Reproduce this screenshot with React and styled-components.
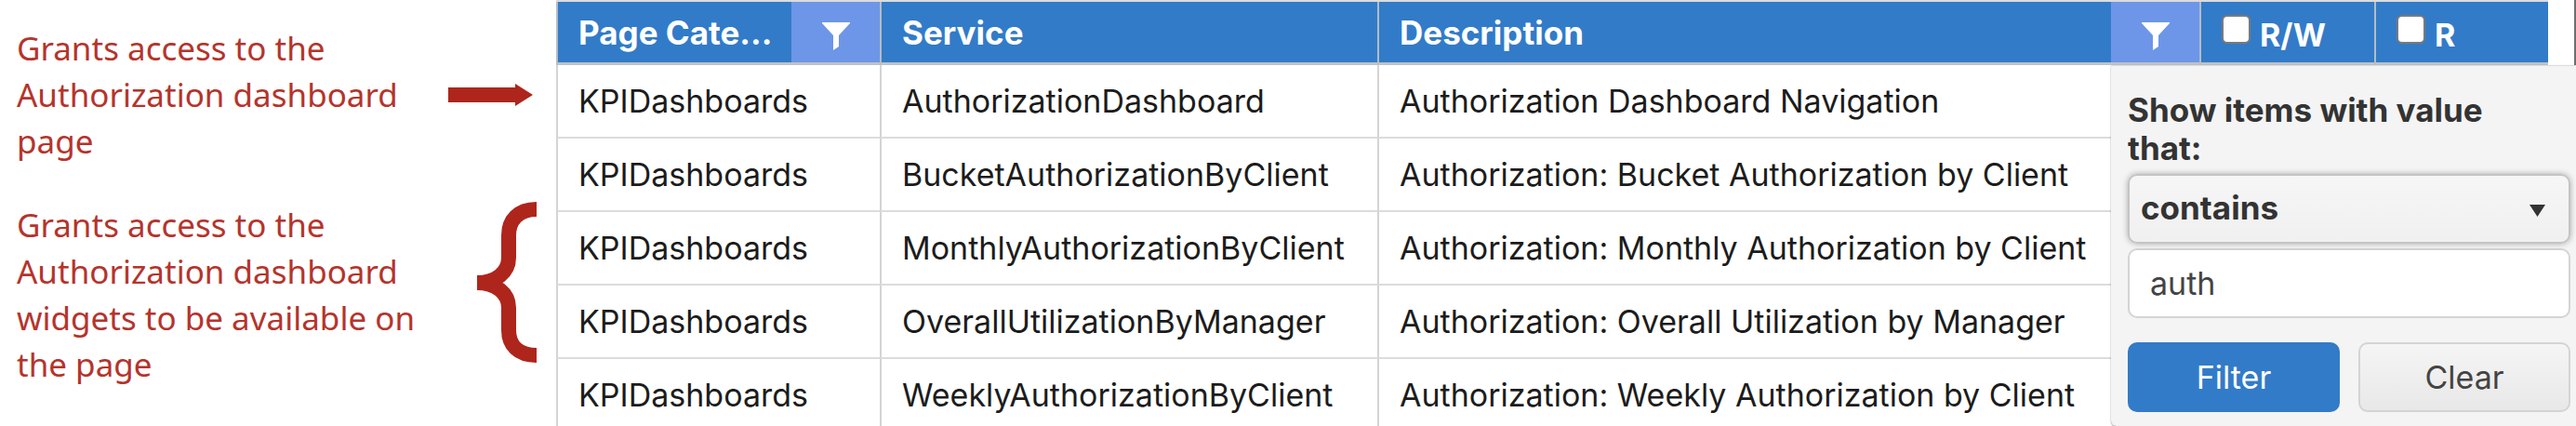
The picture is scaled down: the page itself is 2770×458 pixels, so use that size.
import React, { useState } from "react";
import styled, { createGlobalStyle } from "styled-components";

const rows = [
  {
    service: "AuthorizationDashboard",
    description: "Authorization Dashboard Navigation",
  },
  {
    service: "BucketAuthorizationByClient",
    description: "Authorization: Bucket Authorization by Client",
  },
  {
    service: "MonthlyAuthorizationByClient",
    description: "Authorization: Monthly Authorization by Client",
  },
  {
    service: "OverallUtilizationByManager",
    description: "Authorization: Overall Utilization by Manager",
  },
  {
    service: "WeeklyAuthorizationByClient",
    description: "Authorization: Weekly Authorization by Client",
  },
];

const FunnelIcon = () => (
  <svg width="30" height="30" viewBox="0 0 30 30" aria-hidden="true">
    <path d="M0 0H30V1L18 14V26L12 30V14L0 1Z" fill="#fff" />
  </svg>
);

const App = () => {
  const [value, setValue] = useState("auth");

  return (
    <Page>
      <GlobalStyle />
      <Notes>
        <Note $align="center">
          <NoteText>
            Grants access to the Authorization dashboard page
          </NoteText>
          <svg width="95" height="24" viewBox="0 0 95 24" aria-hidden="true">
            <path d="M0 4H72V0L91 12L72 24V20H0Z" fill="#ae251c" />
          </svg>
        </Note>
        <Note $align="flex-start">
          <NoteText>
            Grants access to the Authorization dashboard widgets to be available
            on the page
          </NoteText>
          <svg width="64" height="173" viewBox="0 0 64 173" aria-hidden="true">
            <path
              d="M64 8C44 8 34 20 34 36V60C34 76 20 87 0 87C20 87 34 98 34 114V138C34 154 44 165 64 165"
              fill="none"
              stroke="#ae251c"
              strokeWidth="16"
            />
          </svg>
        </Note>
      </Notes>
      <GridArea>
        <Table>
          <colgroup>
            <Col $width="348px" />
            <Col $width="535px" />
            <Col />
            <Col $width="188px" />
            <Col $width="187px" />
          </colgroup>
          <thead>
            <tr>
              <HeadCell>
                <HeadInner>
                  <HeadTitle>Page Cate...</HeadTitle>
                  <FilterBtn aria-label="Filter page category">
                    <FunnelIcon />
                  </FilterBtn>
                </HeadInner>
              </HeadCell>
              <HeadCell>
                <HeadInner>
                  <HeadTitle>Service</HeadTitle>
                </HeadInner>
              </HeadCell>
              <HeadCell>
                <HeadInner>
                  <HeadTitle>Description</HeadTitle>
                  <FilterBtn aria-label="Filter description">
                    <FunnelIcon />
                  </FilterBtn>
                </HeadInner>
              </HeadCell>
              <HeadCell>
                <CheckLabel>
                  <Check type="checkbox" />
                  <span>R/W</span>
                </CheckLabel>
              </HeadCell>
              <HeadCell>
                <CheckLabel>
                  <Check type="checkbox" />
                  <span>R</span>
                </CheckLabel>
              </HeadCell>
            </tr>
          </thead>
          <tbody>
            {rows.map((row) => (
              <tr key={row.service}>
                <Cell>KPIDashboards</Cell>
                <Cell>{row.service}</Cell>
                <Cell>{row.description}</Cell>
                <Cell />
                <Cell />
              </tr>
            ))}
          </tbody>
        </Table>
        <ScrollEdge />
        <FilterMenu onSubmit={(e) => e.preventDefault()}>
          <MenuLabel htmlFor="operator">Show items with value that:</MenuLabel>
          <SelectWrap>
            <Select id="operator" defaultValue="contains">
              <option value="contains">contains</option>
              <option value="equals">equals</option>
            </Select>
            <SelectArrow width="17" height="13" viewBox="0 0 17 13">
              <path d="M0 0H17L8.5 13Z" fill="#333" />
            </SelectArrow>
          </SelectWrap>
          <TextField
            aria-label="Filter value"
            value={value}
            onChange={(e) => setValue(e.target.value)}
          />
          <Actions>
            <ActionBtn type="submit" $primary>
              Filter
            </ActionBtn>
            <ActionBtn type="button" onClick={() => setValue("")}>
              Clear
            </ActionBtn>
          </Actions>
        </FilterMenu>
      </GridArea>
    </Page>
  );
};
export default App;

const GlobalStyle = createGlobalStyle`
  * {
    box-sizing: border-box;
  }
  body {
    margin: 0;
    background: #fff;
    font-family: Inter, "Liberation Sans", sans-serif;
  }
`;
const Page = styled.div`
  display: flex;
  height: 100vh;
  overflow: hidden;
`;
const Notes = styled.div`
  display: flex;
  flex: 0 0 598px;
  flex-direction: column;
  gap: 40px;
  padding: 27px 21px 0 18px;
`;
const Note = styled.div`
  display: flex;
  justify-content: space-between;
  align-items: ${(props) => props.$align};
`;
const NoteText = styled.p`
  width: 440px;
  margin: 0;
  color: #b5342c;
  font-family: "Noto Sans", sans-serif;
  font-size: 35px;
  line-height: 50px;
`;
const GridArea = styled.div`
  position: relative;
  flex: 1;
  min-width: 0;
  padding-right: 30px;
`;
const Table = styled.table`
  width: 100%;
  table-layout: fixed;
  border-collapse: separate;
  border-spacing: 0;
  border-top: 2px solid #dcdcdc;
`;
const Col = styled.col`
  width: ${(props) => props.$width || "auto"};
`;
const HeadCell = styled.th`
  height: 68px;
  padding: 0;
  border-left: 2px solid #b4bcc4;
  border-bottom: 3px solid #bdc3c9;
  background: #327bc8;
  color: #fff;
  font-size: 35px;
  font-weight: 700;
  text-align: left;
`;
const HeadInner = styled.div`
  display: flex;
  align-items: center;
  height: 65px;
  padding-left: 22px;
`;
const HeadTitle = styled.span`
  flex: 1;
  white-space: nowrap;
`;
const FilterBtn = styled.button`
  display: flex;
  align-items: center;
  justify-content: center;
  width: 95px;
  height: 65px;
  padding: 8px 0 0;
  border: none;
  background: #6d96e8;
  cursor: pointer;
`;
const CheckLabel = styled.label`
  display: flex;
  align-items: flex-start;
  gap: 10px;
  height: 65px;
  padding-left: 22px;
  font-size: 34px;
  line-height: 50px;

  span {
    padding-top: 11px;
  }
`;
const Check = styled.input`
  appearance: none;
  width: 31px;
  height: 31px;
  margin: 14px 0 0;
  border: 2px solid #7a7a7a;
  border-radius: 6px;
  background: #fff;
`;
const Cell = styled.td`
  height: 79px;
  padding: 0 0 0 22px;
  border-left: 2px solid #d4d4d4;
  border-bottom: 2px solid #dcdcdc;
  color: #1c1c1c;
  font-size: 34px;
  white-space: nowrap;
`;
const ScrollEdge = styled.div`
  position: absolute;
  top: 0;
  right: 0;
  width: 2px;
  height: 70px;
  background: #6e6e6e;
`;
const FilterMenu = styled.form`
  position: absolute;
  top: 70px;
  right: 0;
  width: 500px;
  padding: 27px 6px 15px 18px;
  border-top: 1px solid #dcdcdc;
  border-radius: 0 0 0 6px;
  background: #f4f4f4;
  box-shadow: 0 1px 2px rgba(0, 0, 0, 0.4);
  color: #333;
`;
const MenuLabel = styled.label`
  display: block;
  padding: 0 24px 7px 0;
  font-size: 35px;
  font-weight: 700;
  line-height: 41px;
`;
const SelectWrap = styled.div`
  position: relative;
`;
const Select = styled.select`
  appearance: none;
  display: block;
  width: 100%;
  height: 75px;
  padding: 0 12px 4px;
  border: 2px solid #c4c4c4;
  border-radius: 10px;
  background: linear-gradient(#f6f6f6, #f0f0f0);
  box-shadow: 0 0 6px rgba(0, 0, 0, 0.3);
  color: #333;
  font-family: inherit;
  font-size: 35px;
  font-weight: 700;
`;
const SelectArrow = styled.svg`
  position: absolute;
  top: 33px;
  right: 27px;
  pointer-events: none;
`;
const TextField = styled.input`
  display: block;
  width: 100%;
  height: 75px;
  margin-top: 5px;
  padding: 0 22px;
  border: 2px solid #d4d4d4;
  border-radius: 10px;
  background: #fff;
  color: #444;
  font-family: inherit;
  font-size: 34px;
  outline: none;
`;
const Actions = styled.div`
  display: flex;
  gap: 20px;
  margin-top: 26px;
`;
const ActionBtn = styled.button`
  flex: 1;
  height: 75px;
  border: 2px solid ${(props) => (props.$primary ? "#327bc8" : "#d4d4d4")};
  border-radius: 10px;
  background: ${(props) =>
    props.$primary ? "#327bc8" : "linear-gradient(#f5f5f5, #e8e8e8)"};
  color: ${(props) => (props.$primary ? "#fff" : "#444")};
  font-family: inherit;
  font-size: 34px;
  cursor: pointer;
`;
